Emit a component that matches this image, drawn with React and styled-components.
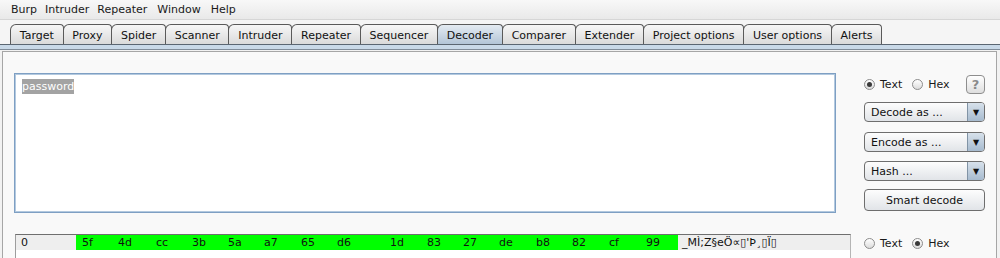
import React from "react";
import styled, { createGlobalStyle } from "styled-components";

const Global = createGlobalStyle`
  html, body { margin: 0; padding: 0; }
  body {
    width: 1000px; height: 258px; overflow: hidden;
    background: #f2f2f2;
    font-family: "DejaVu Sans", "Liberation Sans", sans-serif;
    font-size: 11px; color: #111;
  }
`;

const Window = styled.div`
  width: 1000px; height: 258px; overflow: hidden;
  display: flex; flex-direction: column;
  & > * { flex-shrink: 0; }
`;

const MenuBar = styled.div`
  height: 19px; display: flex; align-items: center;
  padding-left: 7px; gap: 0;
  background: linear-gradient(#f8f8f8, #e9e9e9);
  border-bottom: 1px solid #d6d6d6;
`;

const MenuItem = styled.span`
  padding: 0 4px 1px 4px; margin-right: ${p => p.$mr || 0}px;
  color: #1a1a1a;
`;

const TabArea = styled.div`
  height: 20px; padding-top: 4px; padding-left: 10px;
  display: flex; align-items: flex-end;
  background: #f5f5f5;
`;

const Tab = styled.div`
  height: 20px; box-sizing: border-box;
  padding: 1px 8.75px 0 8.75px;
  margin-left: -1px;
  display: flex; align-items: center;
  border: 1px solid #5a5a5a; border-bottom: none;
  border-radius: 6px 4px 0 0;
  background: ${p => p.$active
    ? "linear-gradient(#e4ebf2, #b3c5d7)"
    : "linear-gradient(#f7f7f7, #dadada)"};
  color: #111;
  &:first-child { margin-left: 0; }
`;

const TabBand = styled.div`
  height: 4px;
  border-top: 1px solid #5b6672;
  border-bottom: 1px solid #7f8b98;
  background: #c9d9e8;
`;

const Panel = styled.div`
  flex: 1 0 auto;
  margin: 1px 3px 0 2px;
  border: 1px solid #a6a6a6; border-bottom: none;
  background: #f9f9f9;
  padding: 21px 11px 0 11px;
`;

const TopSection = styled.div`
  display: flex; align-items: flex-start; gap: 28px;
`;

const Editor = styled.div`
  width: 822px; height: 140px; box-sizing: border-box;
  border: 1px solid #7e9fc3;
  box-shadow: inset 0 0 0 1px #b3c9df;
  background: #fff;
  padding: 6px 7px;
`;

const Selected = styled.span`
  background: #a3a3a3; color: #fff;
  padding: 1px 0;
`;

const SideColumn = styled.div`
  width: 121px; margin-top: 1px;
  display: flex; flex-direction: column;
`;

const RadioRow = styled.div`
  height: 20px; display: flex; align-items: center;
`;

const RadioOption = styled.label`
  display: flex; align-items: center; gap: 5px;
  margin-right: ${p => p.$mr || 0}px;
  color: #1a1a1a;
`;

const RadioCircle = styled.span`
  width: 11px; height: 11px; box-sizing: border-box;
  border-radius: 50%;
  border: 1px solid #8c8c8c;
  background: linear-gradient(#ffffff, #dcdcdc);
  display: flex; align-items: center; justify-content: center;
  &::after {
    content: "";
    width: 5px; height: 5px; border-radius: 50%;
    background: ${p => (p.$checked ? "#3a3a3a" : "transparent")};
  }
`;

const HelpButton = styled.div`
  margin-left: auto;
  width: 19px; height: 19px; box-sizing: border-box;
  border: 1px solid #8e8e8e; border-radius: 4px;
  background: linear-gradient(#ffffff, #dedede);
  display: flex; align-items: center; justify-content: center;
  color: #8a8a8a; font-weight: bold; font-size: 13px;
`;

const Dropdown = styled.div`
  margin-top: ${p => p.$mt}px;
  height: 20px; box-sizing: border-box;
  border: 1px solid #6e6e6e; border-radius: 4px;
  background: linear-gradient(#fdfdfd, #e1e4e8);
  display: flex; overflow: hidden;
`;

const DropLabel = styled.span`
  flex: 1; padding-left: 6px;
  display: flex; align-items: center;
`;

const DropArrow = styled.span`
  width: 16px; border-left: 1px solid #8193a5;
  background: linear-gradient(#d7e1eb, #a7bbcf);
  display: flex; align-items: center; justify-content: center;
  font-size: 8px; color: #111;
`;

const Button = styled.div`
  margin-top: ${p => p.$mt}px;
  height: 22px; box-sizing: border-box;
  border: 1px solid #6e6e6e; border-radius: 4px;
  background: linear-gradient(#fdfdfd, #e1e4e8);
  display: flex; align-items: center; justify-content: center;
`;

const BottomSection = styled.div`
  margin-top: 21px;
  display: flex; align-items: flex-start;
`;

const HexBox = styled.div`
  margin-left: 1px; width: 836px; height: 40px; box-sizing: border-box;
  border-top: 1px solid #6f6f6f;
  border-left: 1px solid #9d9d9d;
  border-right: 1px solid #b5b5b5;
  background: #fff;
`;

const HexRow = styled.div`
  display: grid;
  grid-template-columns: ${p => p.$cols};
  height: 15px; line-height: 15px;
`;

const HexCell = styled.span`
  background: ${p => p.$bg};
  padding-left: ${p => p.$pl}px;
  white-space: nowrap; overflow: hidden;
`;

const BottomRadios = styled.div`
  margin-left: 13px; height: 16px; margin-top: 1px;
  display: flex; align-items: center;
`;

const tabs = ["Target", "Proxy", "Spider", "Scanner", "Intruder", "Repeater", "Sequencer", "Decoder", "Comparer", "Extender", "Project options", "User options", "Alerts"];
const hex = ["5f", "4d", "cc", "3b", "5a", "a7", "65", "d6", "1d", "83", "27", "de", "b8", "82", "cf", "99"];
const hexWidths = [36, 38, 36, 36, 36, 37, 36, 53, 37, 36, 36, 37, 36, 37, 37, 38];
const cols = ["60px", ...hexWidths.map(w => w + "px"), "1fr"].join(" ");

export default function App() {
  return (
    <Window>
      <Global />
      <MenuBar>
        <MenuItem>Burp</MenuItem>
        <MenuItem>Intruder</MenuItem>
        <MenuItem $mr={2}>Repeater</MenuItem>
        <MenuItem $mr={2}>Window</MenuItem>
        <MenuItem>Help</MenuItem>
      </MenuBar>
      <TabArea>
        {tabs.map(t => (
          <Tab key={t} $active={t === "Decoder"}>{t}</Tab>
        ))}
      </TabArea>
      <TabBand />
      <Panel>
        <TopSection>
          <Editor><Selected>password</Selected></Editor>
          <SideColumn>
            <RadioRow>
              <RadioOption $mr={10}><RadioCircle $checked />Text</RadioOption>
              <RadioOption><RadioCircle />Hex</RadioOption>
              <HelpButton>?</HelpButton>
            </RadioRow>
            <Dropdown $mt={8}><DropLabel>Decode as ...</DropLabel><DropArrow>▼</DropArrow></Dropdown>
            <Dropdown $mt={10}><DropLabel>Encode as ...</DropLabel><DropArrow>▼</DropArrow></Dropdown>
            <Dropdown $mt={9}><DropLabel>Hash ...</DropLabel><DropArrow>▼</DropArrow></Dropdown>
            <Button $mt={8}>Smart decode</Button>
          </SideColumn>
        </TopSection>
        <BottomSection>
          <HexBox>
            <HexRow $cols={cols}>
              <HexCell $bg="#eeeeee" $pl={5}>0</HexCell>
              {hex.map((h, i) => (
                <HexCell key={i} $bg="#00ff00" $pl={6}>{h}</HexCell>
              ))}
              <HexCell $bg="#eeeeee" $pl={4}>_MÌ;Z§eÖ∝▯'Þ¸▯Ï▯</HexCell>
            </HexRow>
          </HexBox>
          <BottomRadios>
            <RadioOption $mr={10}><RadioCircle />Text</RadioOption>
            <RadioOption><RadioCircle $checked />Hex</RadioOption>
          </BottomRadios>
        </BottomSection>
      </Panel>
    </Window>
  );
}
